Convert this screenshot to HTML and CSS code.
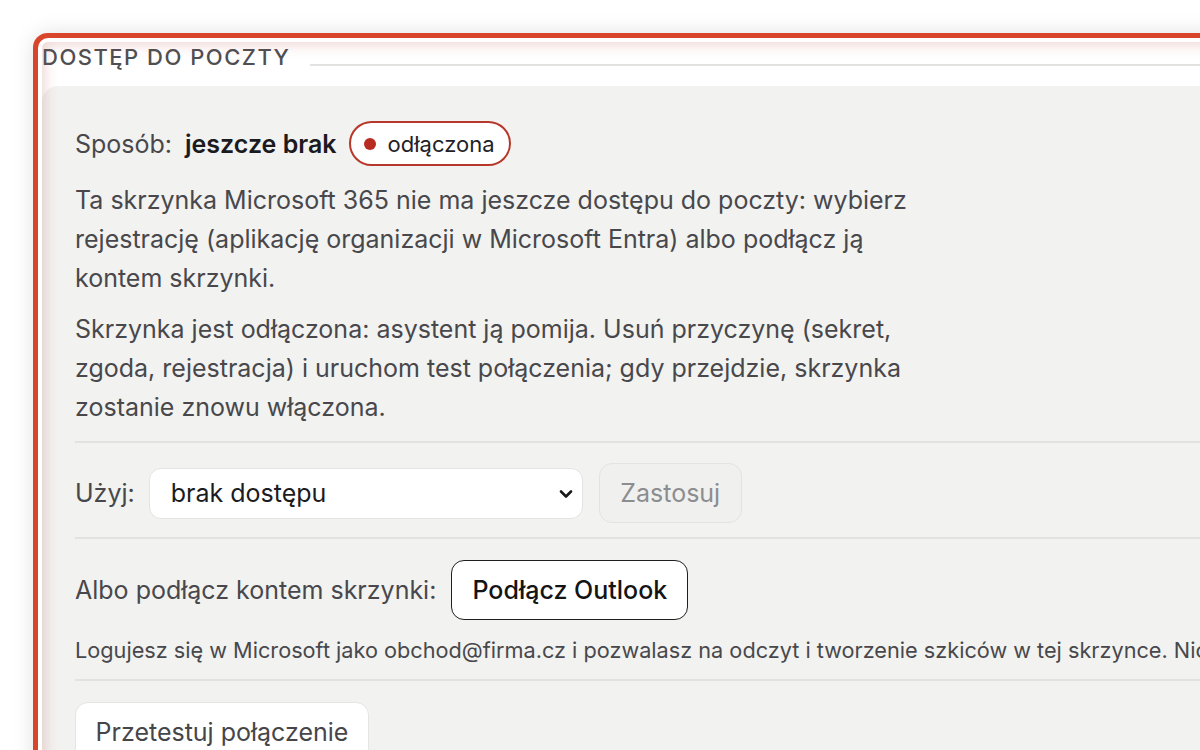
FILE: index.html
```html
<!DOCTYPE html>
<html lang="pl">
<head>
<meta charset="utf-8">
<title>Dostęp do poczty</title>
<link rel="stylesheet" href="styles.css">
</head>
<body>
<div class="page">
  <section class="mailbox-access">
    <div class="legend-row">
      <h2 class="legend">Dostęp do poczty</h2>
      <div class="legend-line"></div>
    </div>
    <div class="panel">
      <div class="status-row">
        <span class="label">Sposób:</span>
        <strong class="method">jeszcze brak</strong>
        <span class="badge"><span class="dot"></span>odłączona</span>
      </div>
      <p class="text first">Ta skrzynka Microsoft 365 nie ma jeszcze dostępu do poczty: wybierz rejestrację (aplikację organizacji w Microsoft Entra) albo podłącz ją kontem skrzynki.</p>
      <p class="text second">Skrzynka jest odłączona: asystent ją pomija. Usuń przyczynę (sekret, zgoda, rejestracja) i uruchom test połączenia; gdy przejdzie, skrzynka zostanie znowu włączona.</p>
      <hr class="sep sep-a">
      <div class="use-row">
        <label class="label" for="use">Użyj:</label>
        <span class="select-wrap">
          <select id="use" class="select">
            <option>brak dostępu</option>
          </select>
          <svg class="chev" width="14" height="10" viewBox="0 0 14 10"><path d="M2 2.5 L7 7.5 L12 2.5" fill="none" stroke="#1a1a1a" stroke-width="2.6" stroke-linecap="round" stroke-linejoin="round"/></svg>
        </span>
        <button class="btn btn-disabled" disabled>Zastosuj</button>
      </div>
      <hr class="sep sep-b">
      <div class="connect-row">
        <span class="label">Albo podłącz kontem skrzynki:</span>
        <button class="btn btn-dark">Podłącz Outlook</button>
      </div>
      <p class="hint">Logujesz się w Microsoft jako obchod@firma.cz i pozwalasz na odczyt i tworzenie szkiców w tej skrzynce. Nic</p>
      <hr class="sep sep-c">
      <div class="test-row">
        <button class="btn btn-light">Przetestuj połączenie</button>
      </div>
    </div>
  </section>
</div>
</body>
</html>
```

FILE: styles.css
```css
html, body {
  margin: 0;
  padding: 0;
  background: #ffffff;
  overflow: hidden;
}
body {
  font-family: "Inter", "Noto Sans", "Liberation Sans", sans-serif;
  color: #48484c;
  width: 1200px;
  height: 750px;
}
.page {
  padding: 42px 0 0 42px;
}
.mailbox-access {
  position: relative;
  width: 1300px;
  background: #ffffff;
  border-radius: 6px;
  box-shadow:
    0 0 0 4px #ffffff,
    0 0 0 9px #d9452a,
    0 0 22px 8px rgba(0, 0, 0, 0.13);
  padding-bottom: 60px;
}
.mailbox-access::after {
  content: "";
  position: absolute;
  inset: 0;
  border-radius: 6px;
  box-shadow: inset 0 0 14px 2px rgba(185, 90, 80, 0.28);
  pointer-events: none;
}
.legend-row {
  display: flex;
  align-items: flex-end;
  padding-top: 1px;
}
.legend {
  margin: 0;
  padding: 0 20px 0 0;
  font-size: 22px;
  line-height: 28px;
  font-weight: 500;
  letter-spacing: 1.5px;
  text-transform: uppercase;
  color: #4f4f52;
}
.legend-line {
  flex: 1;
  height: 2px;
  background: #e2e2e0;
  margin-bottom: 5px;
}
.panel {
  margin-top: 15px;
  background: #f2f2f0;
  border-radius: 16px;
  padding: 35px 0 0 33px;
}
.status-row {
  display: flex;
  align-items: center;
  height: 45px;
}
.label {
  font-size: 25px;
  color: #48484c;
}
.method {
  margin-left: 13px;
  font-size: 25px;
  font-weight: 600;
  color: #1a1a20;
}
.badge {
  margin-left: 12px;
  display: inline-flex;
  align-items: center;
  height: 45px;
  box-sizing: border-box;
  padding: 0 14px 0 13px;
  border: 2px solid #b7382a;
  border-radius: 23px;
  background: #ffffff;
  font-size: 22px;
  color: #222226;
}
.dot {
  width: 12px;
  height: 12px;
  border-radius: 50%;
  background: #b82b20;
  margin-right: 12px;
}
.text {
  margin: 0;
  max-width: 850px;
  font-size: 25px;
  line-height: 39px;
  color: #48484c;
}
.text.first {
  margin-top: 15px;
}
.text.second {
  margin-top: 12px;
}
.sep {
  border: 0;
  height: 2px;
  background: #e2e2df;
  margin: 0;
}
.sep-a {
  margin-top: 14px;
}
.use-row {
  display: flex;
  align-items: center;
  margin-top: 20px;
  height: 60px;
}
.select-wrap {
  position: relative;
  margin-left: 14px;
  display: inline-block;
}
.select {
  appearance: none;
  -webkit-appearance: none;
  display: block;
  width: 434px;
  height: 51px;
  box-sizing: border-box;
  border: 1px solid #e4e4e2;
  border-radius: 12px;
  background: #ffffff;
  font-family: inherit;
  font-size: 25px;
  color: #1c1c1f;
  padding: 0 40px 0 21px;
}
.chev {
  position: absolute;
  right: 10px;
  top: 21px;
  pointer-events: none;
}
.btn {
  font-family: inherit;
  font-size: 25px;
  height: 60px;
  box-sizing: border-box;
  border-radius: 13px;
  cursor: pointer;
  padding: 0;
}
.btn-disabled {
  margin-left: 16px;
  width: 143px;
  background: #f0f0ee;
  border: 1px solid #e3e3e1;
  color: #8d8d8f;
}
.sep-b {
  margin-top: 14px;
}
.connect-row {
  display: flex;
  align-items: center;
  margin-top: 21px;
  height: 60px;
}
.btn-dark {
  margin-left: 15px;
  width: 237px;
  background: #ffffff;
  border: 1.5px solid #1f1f1f;
  color: #141414;
  font-weight: 500;
}
.hint {
  margin: 16px 0 0;
  font-size: 21.7px;
  line-height: 28px;
  white-space: nowrap;
  color: #48484c;
}
.sep-c {
  margin-top: 15px;
}
.test-row {
  margin-top: 21px;
}
.btn-light {
  width: 294px;
  background: #ffffff;
  border: 1px solid #e5e5e3;
  color: #464649;
}
```
